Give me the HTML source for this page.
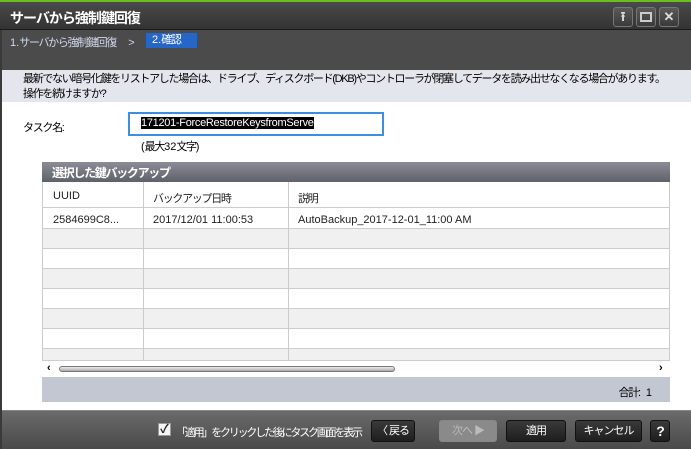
<!DOCTYPE html><html><head><meta charset="utf-8"><style>
*{margin:0;padding:0;box-sizing:border-box}
body{width:691px;height:449px;overflow:hidden;background:#3a3a3a;font-family:"Liberation Sans","Noto Sans CJK JP",sans-serif;font-size:11px;position:relative}
.abs{position:absolute}
.j{letter-spacing:-1.3px}
#title{left:0;top:0;width:691px;height:30px;background:linear-gradient(#4a4a4a,#333);border-top:2px solid #6abf1e;border-bottom:1px solid #1a1a1a}
#title .t{left:10px;top:6px;color:#fff;font-weight:bold;font-size:14px;letter-spacing:-1px}
.wb{top:5px;width:20px;height:20px;border:1px solid #777;border-radius:3px;background:linear-gradient(#5a5a5a,#3a3a3a);color:#ddd;font-size:13px;text-align:center;line-height:18px;font-weight:bold}
#steps{left:2px;top:30px;width:689px;height:40px;background:#4b4b4b}
#msg{left:2px;top:70px;width:689px;height:32px;background:#e3e6ec;color:#000;padding:2px 0 0 21px;line-height:15px;white-space:nowrap}
#main{left:2px;top:102px;width:689px;height:308px;background:#fff}
#footer{left:2px;top:410px;width:689px;height:39px;background:linear-gradient(#6a6a6a,#4a4a4a);border-top:1px solid #888}
.btn{top:420px;height:22px;border:1px solid #111;border-radius:3px;background:linear-gradient(#3a3a3a,#1e1e1e);color:#fff;text-align:center;line-height:20px;letter-spacing:-1px}
.row{position:absolute;left:0;width:628px;height:20px;border-bottom:1px solid #ccc}
.vl{position:absolute;top:20px;width:1px;height:179px;background:#ccc}
.cell{position:absolute;top:4px;color:#222}
</style></head><body>
<div id="title" class="abs"><div class="abs t">サーバから強制鍵回復</div>
<div class="abs wb" style="left:613px">⭱</div><div class="abs wb" style="left:636px"><div style="width:12px;height:10px;border:2px solid #ccc;margin:4px auto"></div></div><div class="abs wb" style="left:659px">✕</div></div>
<div id="steps" class="abs">
<div class="abs" style="left:8px;top:4px;color:#cfd8e8"><span>1.</span><span class="j">サーバから強制鍵回復</span> &nbsp;&nbsp;&nbsp;&gt;</div>
<div class="abs" style="left:144px;top:3px;width:51px;height:15px;background:#2566c7;color:#fff;padding-left:6px;line-height:15px">2.<span class="j">確認</span></div></div>
<div id="msg" class="abs j">最新でない暗号化鍵をリストアした場合は、ドライブ、ディスクボード(DKB)やコントローラが閉塞してデータを読み出せなくなる場合があります。<br>操作を続けますか?</div>
<div id="main" class="abs">
<div class="abs j" style="left:21px;top:17px">タスク名:</div>
<div class="abs" style="left:126px;top:10px;width:256px;height:24px;border:2px solid #3a8fe0;padding:3px 0 0 11px"><span style="background:#000;color:#fff;letter-spacing:-0.3px">171201-ForceRestoreKeysfromServe</span></div>
<div class="abs" style="left:139px;top:36px">(<span class="j">最大</span>32<span class="j">文字</span>)</div>
<div class="abs" style="left:40px;top:60px;width:628px;height:240px;background:#c3c7d1;overflow:hidden">
<div style="position:absolute;left:0;top:0;width:628px;height:20px;background:linear-gradient(#8a8d95,#5e6169);color:#fff;font-weight:bold;font-size:12px;padding:2px 0 0 10px" class="j">選択した鍵バックアップ</div>
<div class="row" style="top:20px;height:26px;background:#fff"></div>
<div class="row" style="top:46px;height:21px;background:#fff"></div>
<div class="row" style="top:67px;background:#f0f0f0"></div>
<div class="row" style="top:87px;background:#fff"></div>
<div class="row" style="top:107px;background:#f0f0f0"></div>
<div class="row" style="top:127px;background:#fff"></div>
<div class="row" style="top:147px;background:#f0f0f0"></div>
<div class="row" style="top:167px;background:#fff"></div>
<div class="row" style="top:187px;height:12px;background:#f0f0f0"></div>
<div class="vl" style="left:0"></div><div class="vl" style="left:101px"></div><div class="vl" style="left:246px"></div><div class="vl" style="left:627px"></div>
<div class="cell" style="left:11px;top:28px">UUID</div>
<div class="cell j" style="left:111px;top:28px">バックアップ日時</div>
<div class="cell j" style="left:256px;top:28px">説明</div>
<div class="cell" style="left:11px;top:52px">2584699C8...</div>
<div class="cell" style="left:111px;top:52px">2017/12/01 11:00:53</div>
<div class="cell" style="left:256px;top:52px">AutoBackup_2017-12-01_11:00 AM</div>
<div style="position:absolute;left:0;top:199px;width:628px;height:16px;background:#fff"><span class="abs" style="left:5px;top:1px;font-size:11px;font-weight:bold">‹</span><div class="abs" style="left:17px;top:5px;width:336px;height:6px;border:1px solid #777;border-radius:3px;background:linear-gradient(#eee,#aaa)"></div><span class="abs" style="left:617px;top:1px;font-size:11px;font-weight:bold">›</span></div>
<div class="abs" style="right:18px;top:222px"><span class="j">合計:</span> &nbsp;1</div>
</div></div>
<div id="footer" class="abs"></div>
<div class="abs" style="left:158px;top:423px;width:13px;height:13px;background:#f4f4f4;border:1px solid #999;color:#223;font-size:12px;line-height:11px;text-align:center;font-weight:bold">✓</div>
<div class="abs" style="left:176px;top:424px;color:#fff;white-space:nowrap;letter-spacing:-2.2px">「適用」をクリックした後にタスク画面を表示</div>
<div class="abs btn" style="left:371px;width:44px">〈 戻る</div>
<div class="abs btn" style="left:439px;width:58px;background:#8a8a8a;border-color:#888;color:#bbb">次へ ▶</div>
<div class="abs btn" style="left:506px;width:60px">適用</div>
<div class="abs btn" style="left:575px;width:67px">キャンセル</div>
<div class="abs btn" style="left:650px;width:20px;font-weight:bold;font-size:14px">?</div>
</body></html>
